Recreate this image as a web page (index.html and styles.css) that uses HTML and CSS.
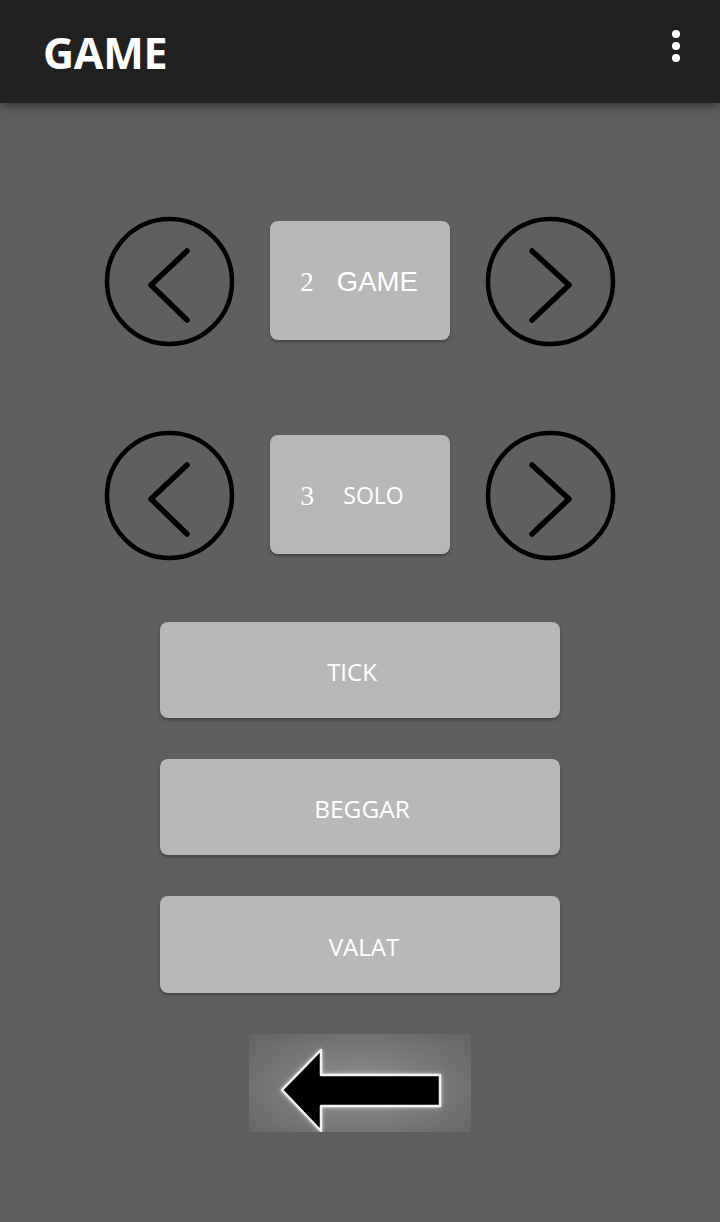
FILE: index.html
```html
<!DOCTYPE html>
<html>
<head>
<meta charset="utf-8">
<link rel="stylesheet" href="styles.css">
</head>
<body>
<header class="appbar">
  <h1 class="title">GAME</h1>
  <svg class="menu" width="12" height="36" viewBox="0 0 12 36">
    <circle cx="6" cy="5" r="4" fill="#fff"/>
    <circle cx="6" cy="17" r="4" fill="#fff"/>
    <circle cx="6" cy="29" r="4" fill="#fff"/>
  </svg>
</header>
<main class="content">
  <div class="selector">
    <svg class="circle-btn" width="131" height="131" viewBox="0 0 131 131">
      <circle cx="65.5" cy="65.5" r="62.5" fill="none" stroke="#000" stroke-width="4.5"/>
      <polyline points="83,35 47,69 83,104" fill="none" stroke="#000" stroke-width="5.5" stroke-linecap="round" stroke-linejoin="round"/>
    </svg>
    <div class="value-box"><span class="num">2</span><span class="label-arial">GAME</span></div>
    <svg class="circle-btn" width="131" height="131" viewBox="0 0 131 131">
      <circle cx="65.5" cy="65.5" r="62.5" fill="none" stroke="#000" stroke-width="4.5"/>
      <polyline points="47,35 84,69 47,104" fill="none" stroke="#000" stroke-width="5.5" stroke-linecap="round" stroke-linejoin="round"/>
    </svg>
  </div>
  <div class="selector second">
    <svg class="circle-btn" width="131" height="131" viewBox="0 0 131 131">
      <circle cx="65.5" cy="65.5" r="62.5" fill="none" stroke="#000" stroke-width="4.5"/>
      <polyline points="83,35 47,69 83,104" fill="none" stroke="#000" stroke-width="5.5" stroke-linecap="round" stroke-linejoin="round"/>
    </svg>
    <div class="value-box"><span class="num num3">3</span><span class="label-open">SOLO</span></div>
    <svg class="circle-btn" width="131" height="131" viewBox="0 0 131 131">
      <circle cx="65.5" cy="65.5" r="62.5" fill="none" stroke="#000" stroke-width="4.5"/>
      <polyline points="47,35 84,69 47,104" fill="none" stroke="#000" stroke-width="5.5" stroke-linecap="round" stroke-linejoin="round"/>
    </svg>
  </div>
  <div class="buttons">
    <div class="btn btn-tick">TICK</div>
    <div class="btn btn-beggar">BEGGAR</div>
    <div class="btn btn-valat">VALAT</div>
  </div>
  <div class="back">
    <svg width="222" height="98" viewBox="0 0 222 98">
      <defs>
        <filter id="glow" x="-20%" y="-20%" width="140%" height="140%">
          <feGaussianBlur in="SourceAlpha" stdDeviation="2" result="b"/>
          <feFlood flood-color="#fff" flood-opacity="0.6"/>
          <feComposite in2="b" operator="in" result="g"/>
          <feMerge><feMergeNode in="g"/><feMergeNode in="SourceGraphic"/></feMerge>
        </filter>
      </defs>
      <path d="M33,56 L72,16 L72,41 L191,41 L191,72 L72,72 L72,97 Z" fill="#000" stroke="#f2f2f2" stroke-width="2.5" stroke-linejoin="round" filter="url(#glow)"/>
    </svg>
  </div>
</main>
</body>
</html>
```
FILE: styles.css
```css
html, body {
  margin: 0;
  padding: 0;
}
body {
  background: #5f5f5f;
  width: 720px;
  height: 1222px;
  overflow: hidden;
  font-family: "Open Sans", "Liberation Sans", sans-serif;
}
.appbar {
  height: 103px;
  background: #212121;
  display: flex;
  align-items: center;
  justify-content: space-between;
  padding: 0 38px 0 43px;
  box-shadow: 0 2px 10px rgba(0,0,0,0.55);
  position: relative;
  z-index: 1;
}
.title {
  margin: 0;
  color: #fff;
  font-family: "Open Sans", sans-serif;
  font-weight: 700;
  font-size: 43px;
  letter-spacing: -0.3px;
  line-height: 1;
  padding-top: 1px;
}
.menu {
  margin-top: -10px;
}
.content {
  display: flex;
  flex-direction: column;
  align-items: center;
  padding-top: 113px;
}
.selector {
  display: flex;
  align-items: center;
  gap: 35px;
}
.selector.second {
  margin-top: 83px;
}
.circle-btn {
  display: block;
}
.value-box {
  width: 180px;
  height: 119px;
  background: #b8b8b8;
  border-radius: 8px;
  box-shadow: 0 2px 3px rgba(0,0,0,0.3);
  display: flex;
  align-items: center;
  justify-content: center;
  color: #fff;
  margin-top: -2px;
}
.num {
  font-family: "Liberation Serif", serif;
  font-size: 27px;
  margin-right: 23px;
  margin-left: -2px;
  margin-top: 3px;
}
.num3 {
  font-size: 28px;
  margin-right: 29px;
  margin-left: -16px;
  margin-top: 2px;
}
.label-arial {
  font-family: "Liberation Sans", Arial, sans-serif;
  font-size: 27.5px;
  margin-top: 3px;
}
.label-open {
  font-family: "Open Sans", sans-serif;
  font-size: 23px;
}
.buttons {
  display: flex;
  flex-direction: column;
  gap: 41px;
  margin-top: 61px;
}
.btn {
  width: 400px;
  height: 96px;
  background: #b8b8b8;
  border-radius: 8px;
  box-shadow: 0 2px 3px rgba(0,0,0,0.3);
  color: #fff;
  font-family: "Open Sans", sans-serif;
  font-size: 24px;
  display: flex;
  align-items: center;
  justify-content: center;
  box-sizing: border-box;
}
.btn-tick {
  padding-right: 16px;
  padding-top: 3px;
}
.btn-beggar {
  padding-left: 4px;
  padding-top: 2px;
  font-size: 24.5px;
}
.btn-valat {
  height: 97px;
  padding-left: 8px;
  padding-top: 4px;
}
.back {
  margin-top: 41px;
  width: 222px;
  height: 98px;
  background: radial-gradient(ellipse at 50% 55%, #959595 0%, #7a7a7a 45%, #646464 100%);
}
.back svg {
  display: block;
}
```
